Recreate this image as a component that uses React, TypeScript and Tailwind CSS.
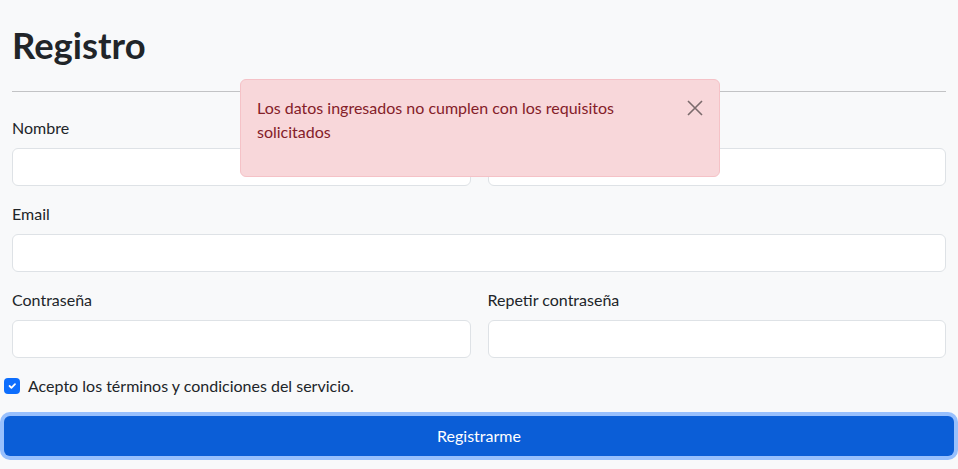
import { useState } from 'react';

const font = { fontFamily: 'Lato, "Noto Sans", "Liberation Sans", sans-serif' };

const Field = ({ label, type = 'text' }: { label: string; type?: string }) => (
  <div className="flex flex-col">
    <label className="mb-2 text-base leading-6 text-[#212529]">{label}</label>
    <input
      type={type}
      className="h-[38px] w-full rounded-[6px] border border-[#dee2e6] bg-white px-3 text-base outline-none"
    />
  </div>
);

export default function App() {
  const [accepted, setAccepted] = useState(true);
  const [showAlert, setShowAlert] = useState(true);

  return (
    <div className="relative min-h-[469px] bg-[#f8f9fa] text-[#212529]" style={font}>
      {/* Alerta */}
      {showAlert && (
        <div className="absolute left-[240px] top-[79px] z-10 w-[480px] rounded-[6px] border border-[#f5c2c7] bg-[#f8d7da] py-4 pl-4 pr-16 text-[#842029]">
          <p className="mb-4 leading-6">Los datos ingresados no cumplen con los requisitos solicitados</p>
          <button
            onClick={() => setShowAlert(false)}
            className="absolute right-[16px] top-[20px] flex h-4 w-4 items-center justify-center opacity-50"
          >
            <svg viewBox="0 0 16 16" className="h-4 w-4" fill="none" stroke="#000" strokeWidth="1.6">
              <path d="M1 1l14 14M15 1L1 15" />
            </svg>
          </button>
        </div>
      )}

      <div className="px-3 pt-6">
        <h1 className="text-[36.4px] font-bold leading-[1.2]">Registro</h1>
        <hr className="mb-4 mt-[23px] border-t border-[#212529] opacity-25" />

        <div className="grid grid-cols-2 gap-x-[17px] gap-y-4 pt-2">
          <Field label="Nombre" />
          <Field label="Apellido" />
          <div className="col-span-2">
            <Field label="Email" type="email" />
          </div>
          <Field label="Contraseña" type="password" />
          <Field label="Repetir contraseña" type="password" />
        </div>
      </div>

      <label className="mt-4 flex items-center gap-2 pl-1 leading-6">
        <span
          onClick={() => setAccepted(!accepted)}
          className={`flex h-4 w-4 items-center justify-center rounded-[4px] ${
            accepted ? 'bg-[#0d6efd]' : 'border border-[#dee2e6] bg-white'
          }`}
        >
          {accepted && (
            <svg viewBox="0 0 20 20" className="h-3 w-3" fill="none" stroke="#fff" strokeWidth="3" strokeLinecap="round" strokeLinejoin="round">
              <path d="M6 10l3 3 6-6" />
            </svg>
          )}
        </span>
        <span>Acepto los términos y condiciones del servicio.</span>
      </label>

      <div className="px-1 pt-[18px]">
        <button className="h-10 w-full rounded-[6px] bg-[#0b5ed7] text-base text-white ring-4 ring-[#98c0fd]">
          Registrarme
        </button>
      </div>
    </div>
  );
}
